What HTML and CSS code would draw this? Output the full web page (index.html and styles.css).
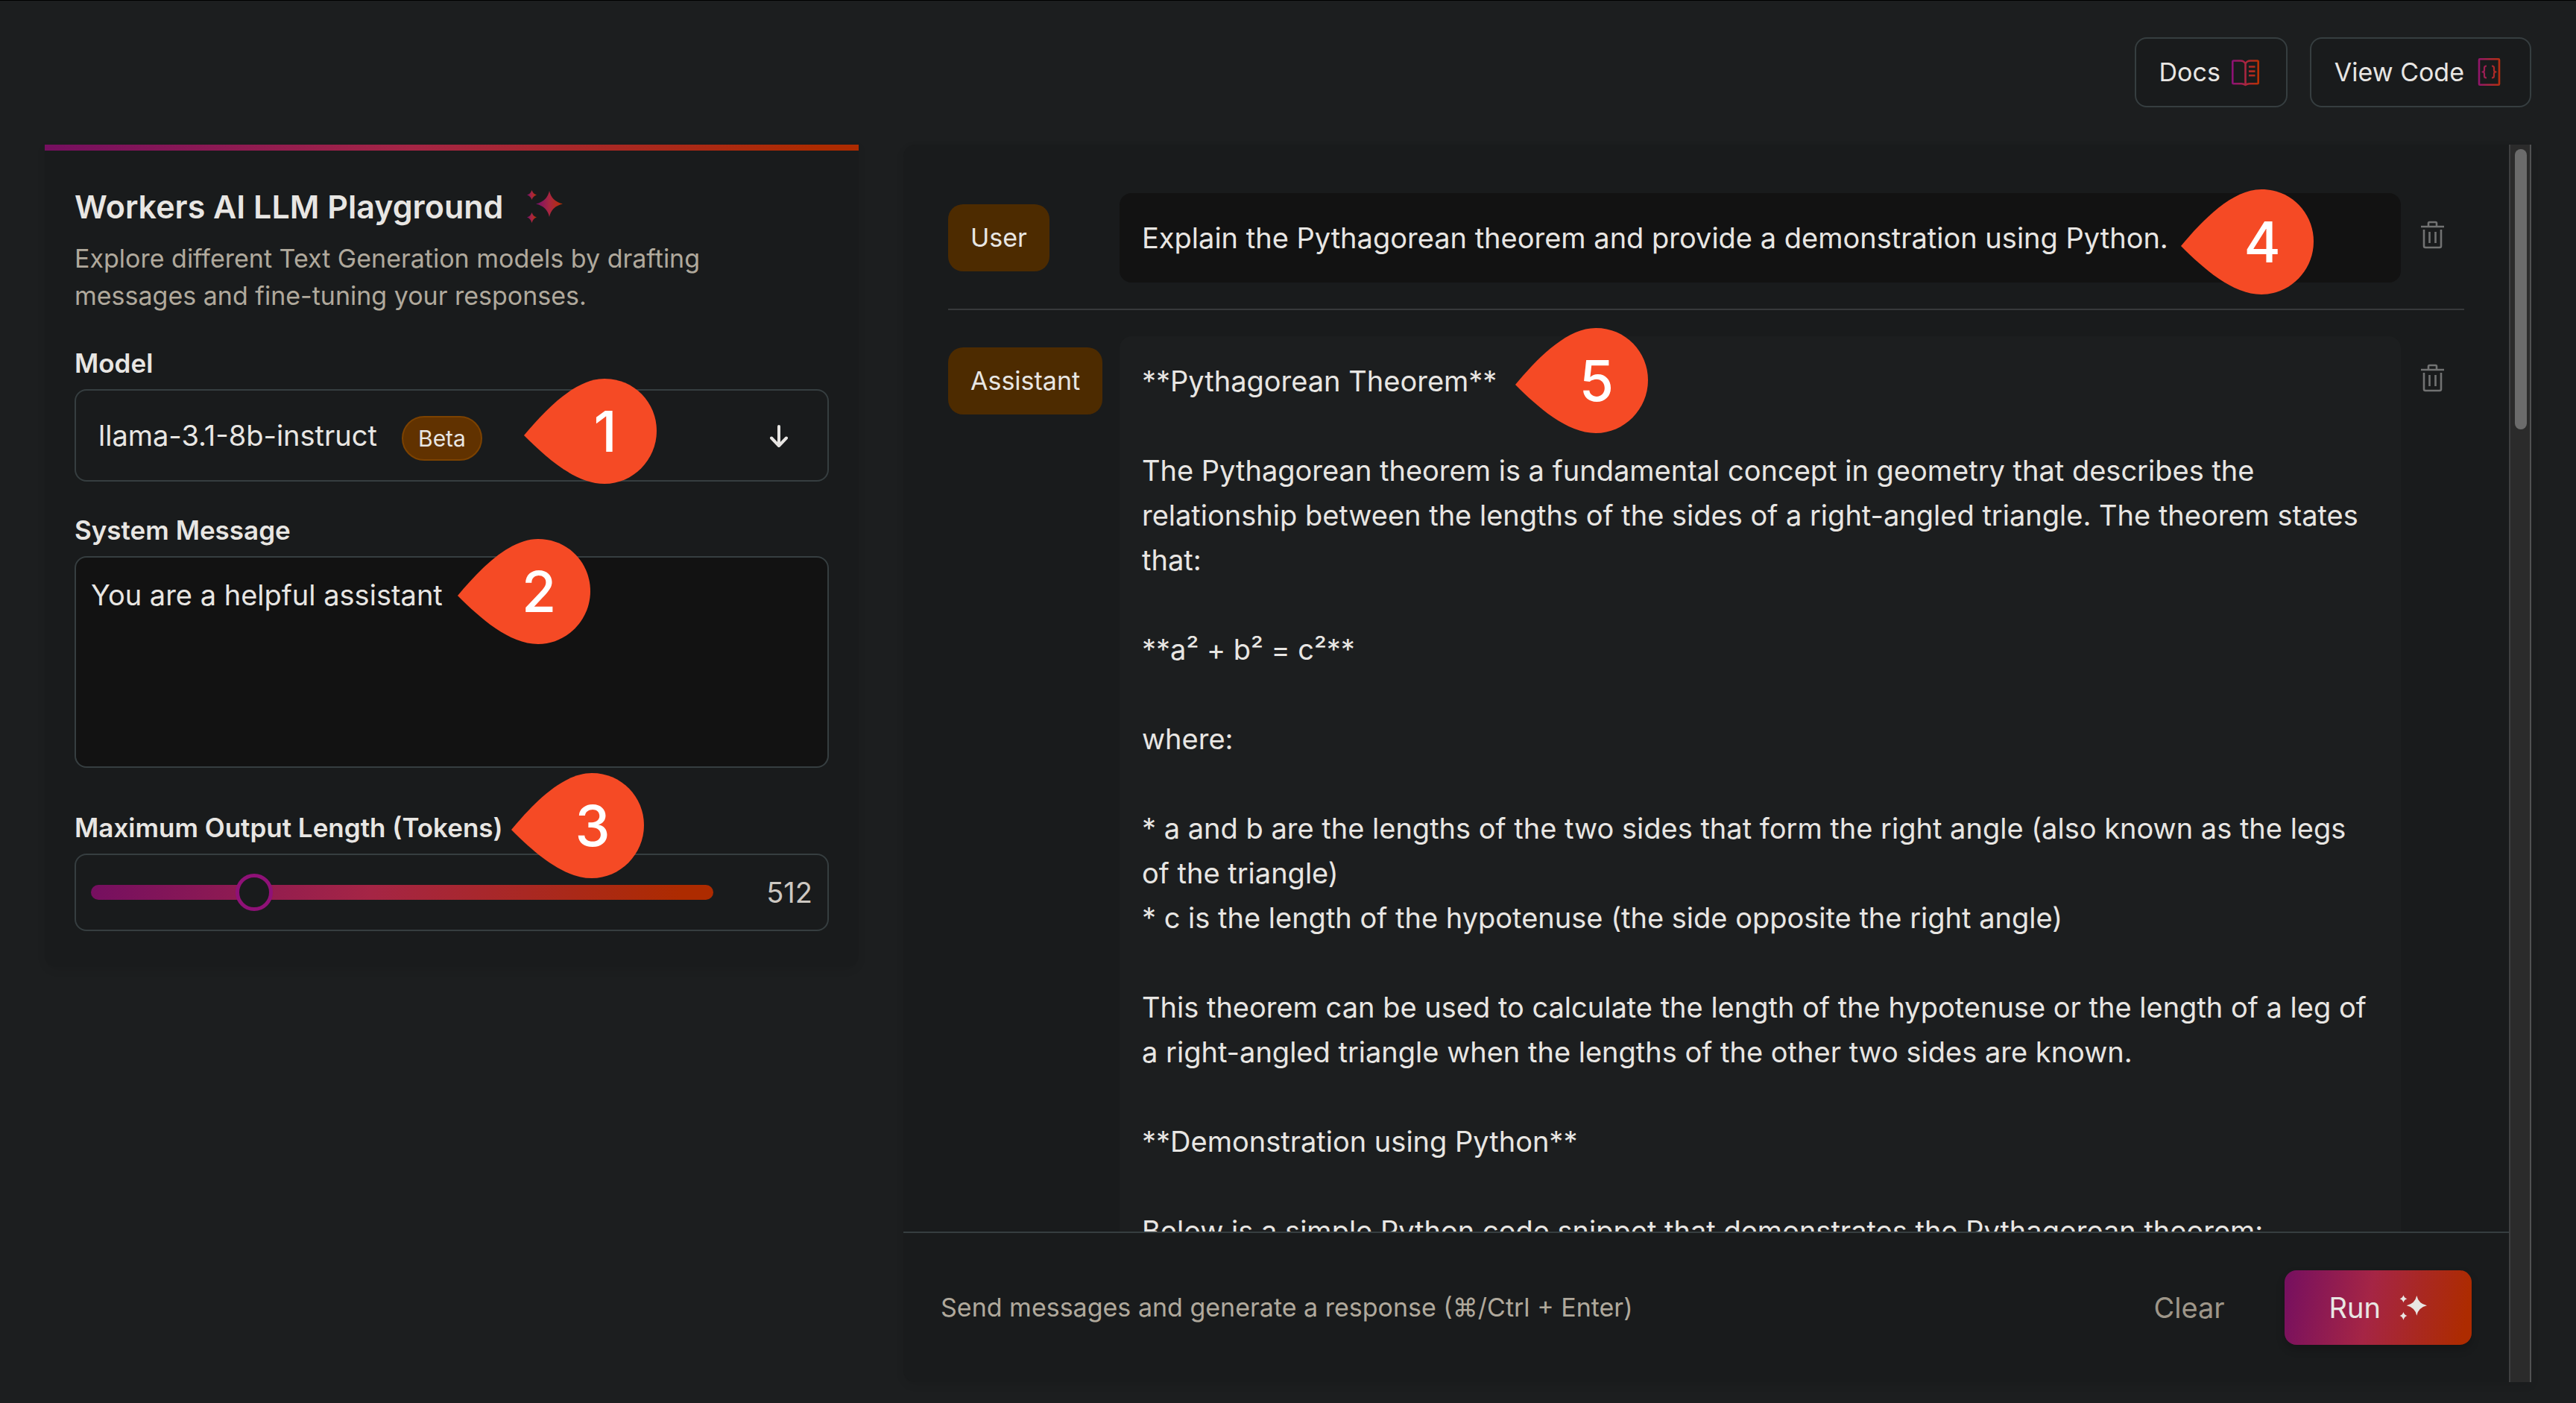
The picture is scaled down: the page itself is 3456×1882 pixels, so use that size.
FILE: index.html
```html
<!DOCTYPE html>
<html lang="en">
<head>
<meta charset="utf-8">
<meta name="viewport" content="width=device-width, initial-scale=1">
<title>Workers AI LLM Playground</title>
<link rel="stylesheet" href="styles.css">
</head>
<body>
<svg class="defs" aria-hidden="true">
  <defs>
    <linearGradient id="brand" x1="0" y1="0" x2="1" y2="0">
      <stop offset="0" stop-color="#750f6c"/>
      <stop offset=".5" stop-color="#a82640"/>
      <stop offset="1" stop-color="#b83000"/>
    </linearGradient>
    <linearGradient id="brand-wide" gradientUnits="userSpaceOnUse" x1="1" y1="20" x2="38" y2="20">
      <stop offset="0" stop-color="#8a1078"/>
      <stop offset=".5" stop-color="#a82640"/>
      <stop offset="1" stop-color="#b83000"/>
    </linearGradient>
    <symbol id="sparkles" viewBox="0 0 50 50">
      <path d="M32 4Q35 18 50 21.500Q35 25 32 39Q29 25 14 21.500Q29 18 32 4Z"/>
      <path d="M8.500 3Q10 8 15 9.500Q10 11 8.500 16Q7 11 2 9.500Q7 8 8.500 3Z"/>
      <path d="M8.500 33Q10 38 15 39.500Q10 41 8.500 47Q7 41 2 39.500Q7 38 8.500 33Z"/>
    </symbol>
    <symbol id="trash" viewBox="0 0 32 38">
      <path d="M0 8H31M10 7V3.500Q10 2 11.500 2H19.500Q21 2 21 3.500V7M4 12V34Q4 36 6 36H25Q27 36 27 34V12M11.500 15V30M19.500 15V30" fill="none" stroke="currentColor" stroke-width="2.600"/>
    </symbol>
    <symbol id="pin" viewBox="0 0 178 141">
      <path d="M0 76C30 40 69 0 108 0C148 0 178 32 178 70C178 109 146 141 108 141C69 141 30 106 0 76Z" fill="#f54a25"/>
    </symbol>
  </defs>
</svg>

<header class="topbar">
  <a class="link-button" href="#docs">Docs
    <svg class="link-icon" viewBox="0 0 40 40" fill="none" stroke="url(#brand-wide)" stroke-width="2.600" stroke-linejoin="round" aria-hidden="true">
      <path d="M19.500 8.500Q17.500 4.500 13 4.500H3.500Q2.300 4.500 2.300 5.700V34Q2.300 35.200 3.500 35.200H14Q17 35.200 19.500 37Q22 35.200 25 35.200H35.500Q36.700 35.200 36.700 34V5.700Q36.700 4.500 35.500 4.500H26Q21.500 4.500 19.500 8.500V37"/>
      <path d="M24 12.500H32.500M24 18.600H32.500M24 24.200H32.500"/>
    </svg>
  </a>
  <a class="link-button" href="#code">View Code
    <svg class="link-icon" viewBox="0 0 40 40" fill="none" stroke="url(#brand-wide)" stroke-width="2.600" stroke-linejoin="round" aria-hidden="true">
      <rect x="6" y="2.300" width="27" height="34.400" rx="1"/>
      <path stroke-width="2.200" d="M16 11.500Q13 11.500 13 14V17Q13 19.500 10.500 19.500Q13 19.500 13 22V25Q13 27.500 16 27.500M23 11.500Q26 11.500 26 14V17Q26 19.500 28.500 19.500Q26 19.500 26 22V25Q26 27.500 23 27.500"/>
    </svg>
  </a>
</header>

<main class="layout">
  <section class="settings">
    <h1 class="title">Workers AI LLM Playground
      <svg class="title-icon" fill="url(#brand)" aria-hidden="true"><use href="#sparkles"/></svg>
    </h1>
    <p class="intro">Explore different Text Generation models by drafting messages and fine-tuning your responses.</p>

    <div class="field">
      <label class="label" for="model">Model</label>
      <div class="model-box">
        <select class="model-select" id="model"><option>llama-3.1-8b-instruct</option></select>
        <span class="beta">Beta</span>
        <svg class="arrow" viewBox="0 0 24 30" fill="none" stroke="currentColor" stroke-width="4" stroke-linecap="round" stroke-linejoin="round" aria-hidden="true"><path d="M12 2V28M2 17.500L12 28L22 17.500"/></svg>
      </div>
      <span class="pin pin-model"><svg aria-hidden="true"><use href="#pin"/></svg><b>1</b></span>
    </div>

    <div class="field">
      <label class="label" for="system">System Message</label>
      <textarea class="system" id="system" rows="4">You are a helpful assistant</textarea>
      <span class="pin pin-system"><svg aria-hidden="true"><use href="#pin"/></svg><b>2</b></span>
    </div>

    <div class="field field-length">
      <label class="label" for="tokens">Maximum Output Length (Tokens)</label>
      <div class="slider-box">
        <input class="slider" id="tokens" type="range" min="0" max="2072" value="512">
        <output class="slider-value" for="tokens">512</output>
      </div>
      <span class="pin pin-length"><svg aria-hidden="true"><use href="#pin"/></svg><b>3</b></span>
    </div>
  </section>

  <section class="chat">
    <div class="chat-body">
      <div class="messages">
        <div class="message">
          <button class="role" type="button">User</button>
          <textarea class="text text-user" rows="1" aria-label="User message">Explain the Pythagorean theorem and provide a demonstration using Python.</textarea>
          <button class="delete" type="button" aria-label="Delete user message"><svg><use href="#trash"/></svg></button>
          <span class="pin pin-user"><svg aria-hidden="true"><use href="#pin"/></svg><b>4</b></span>
        </div>
        <div class="message">
          <button class="role" type="button">Assistant</button>
          <textarea class="text" rows="21" aria-label="Assistant message">**Pythagorean Theorem**

The Pythagorean theorem is a fundamental concept in geometry that describes the relationship between the lengths of the sides of a right-angled triangle. The theorem states that:

**a² + b² = c²**

where:

* a and b are the lengths of the two sides that form the right angle (also known as the legs of the triangle)
* c is the length of the hypotenuse (the side opposite the right angle)

This theorem can be used to calculate the length of the hypotenuse or the length of a leg of a right-angled triangle when the lengths of the other two sides are known.

**Demonstration using Python**

Below is a simple Python code snippet that demonstrates the Pythagorean theorem:</textarea>
          <button class="delete" type="button" aria-label="Delete assistant message"><svg><use href="#trash"/></svg></button>
          <span class="pin pin-assistant"><svg aria-hidden="true"><use href="#pin"/></svg><b>5</b></span>
        </div>
      </div>
      <footer class="actions">
        <p class="hint">Send messages and generate a response (⌘/Ctrl + Enter)</p>
        <button class="clear" type="button">Clear</button>
        <button class="run" type="button">Run <svg fill="currentColor" aria-hidden="true"><use href="#sparkles"/></svg></button>
      </footer>
    </div>
    <div class="scrollbar" aria-hidden="true"><div class="scroll-thumb"></div></div>
  </section>
</main>
</body>
</html>
```
FILE: styles.css
```css
:root {
  --page: #1c1e1f;
  --panel: #191b1c;
  --field: #121212;
  --line: #363e40;
  --text: #e8e6e3;
  --muted: #b0a99c;
  --gradient: linear-gradient(100deg, #750f60, #a52545 45%, #ad2b00 95%);
}

* { box-sizing: border-box; }

body {
  margin: 0;
  height: 100vh;
  display: flex;
  flex-direction: column;
  padding: 49px 60px 28px;
  border-top: 1px solid #000;
  background: var(--page);
  color: var(--text);
  font: 400 38px/60px Inter, "Noto Sans", sans-serif;
}

button, select, textarea, input { font: inherit; color: inherit; margin: 0; }
button { border: 0; background: none; padding: 0; cursor: pointer; }
textarea { display: block; width: 100%; border: 0; resize: none; overflow: hidden; }
h1, p { margin: 0; }
svg { display: block; flex: none; }
.defs { position: absolute; width: 0; height: 0; }

/* Top links */
.topbar { display: flex; justify-content: flex-end; gap: 30px; margin-bottom: 50px; }
.link-button {
  display: flex;
  align-items: center;
  gap: 14px;
  padding: 20px 34px 20px 31px;
  border: 2px solid var(--line);
  border-radius: 16px;
  background: var(--panel);
  color: inherit;
  font-size: 34px;
  line-height: 50px;
  text-decoration: none;
}
.link-icon { width: 40px; height: 40px; }

.layout {
  flex: 1;
  min-height: 0;
  display: grid;
  grid-template-columns: minmax(0, 1fr) minmax(0, 2fr);
  gap: 60px;
}

/* Settings card */
.settings {
  align-self: start;
  padding: 53px 40px 48px;
  border-radius: 0 0 16px 16px;
  background: var(--gradient) top / 100% 8px no-repeat, var(--panel);
  box-shadow: 0 4px 12px rgba(0, 0, 0, .08);
}
.title {
  display: flex;
  align-items: center;
  gap: 30px;
  font-size: 43px;
  font-weight: 600;
  line-height: 60px;
}
.title-icon { width: 50px; height: 50px; }
.intro { max-width: 900px; margin-top: 15px; color: var(--muted); font-size: 34px; line-height: 50px; }
.field { position: relative; margin-top: 40px; }
.field-length { margin-top: 55px; }
.label { display: block; margin-bottom: 10px; font-size: 35px; font-weight: 600; line-height: 50px; }

.model-box { position: relative; }
.model-select {
  display: block;
  width: 100%;
  padding: 30px;
  border: 2px solid var(--line);
  border-radius: 16px;
  background: transparent;
  appearance: none;
}
.beta {
  position: absolute;
  left: 439px;
  top: 36px;
  padding: 3px 20px;
  border: 2px solid #7c4200;
  border-radius: 30px;
  background: #613200;
  font-size: 30px;
  line-height: 50px;
  pointer-events: none;
}
.arrow { position: absolute; right: 55px; top: 48px; width: 24px; height: 30px; pointer-events: none; }

.system { padding: 20px; border: 2px solid var(--line); border-radius: 16px; background: var(--field); }

.slider-box {
  display: flex;
  align-items: center;
  padding: 20px;
  border: 2px solid var(--line);
  border-radius: 16px;
}
.slider {
  flex: 1;
  min-width: 0;
  height: 20px;
  border-radius: 10px;
  background: var(--gradient);
  appearance: none;
}
.slider::-webkit-slider-thumb {
  width: 50px;
  height: 50px;
  border: 5px solid #8f1177;
  border-radius: 50%;
  background: var(--panel);
  appearance: none;
}
.slider-value { width: 133px; color: #cdc8c2; text-align: right; }

/* Chat panel */
.chat {
  display: flex;
  min-height: 0;
  border-radius: 16px 0 0 16px;
  background: var(--panel);
  box-shadow: 0 4px 12px rgba(0, 0, 0, .08);
}
.chat-body { flex: 1; min-width: 0; display: flex; flex-direction: column; }
.messages { flex: 1; min-height: 0; padding: 30px 60px 0; overflow: hidden; }
.message {
  position: relative;
  display: grid;
  grid-template-columns: 230px minmax(0, 1fr) 85px;
  align-items: start;
  padding: 35px 0;
}
.message + .message { border-top: 2px solid #37393b; }
.role {
  justify-self: start;
  margin-top: 15px;
  padding: 20px 30px;
  border-radius: 20px;
  background: #4d2b00;
  font-size: 34px;
  line-height: 50px;
}
.text { padding: 30px; border-radius: 16px; background: #1c1e1f; }
.text-user { background: var(--field); }
.delete { justify-self: center; margin-top: 37px; color: #717272; }
.delete svg { width: 32px; height: 38px; }

.actions {
  display: flex;
  align-items: center;
  padding: 50px;
  border-top: 2px solid var(--line);
}
.hint { flex: 1; color: var(--muted); font-size: 34px; }
.clear { margin-right: 80px; color: #9e9689; }
.run {
  display: flex;
  align-items: center;
  gap: 24px;
  padding: 20px 60px;
  border-radius: 16px;
  background: var(--gradient);
  box-shadow: 0 6px 12px rgba(0, 0, 0, .2);
}
.run svg { width: 38px; height: 38px; }

.scrollbar {
  width: 30px;
  padding: 6px 4px 0 6px;
  border: solid #3f4041;
  border-width: 0 2px;
  border-right-color: #505152;
  background: #2b2b2b;
}
.scroll-thumb { width: 16px; height: 376px; border-radius: 8px; background: #6b6b6b; }

/* Numbered callouts */
.pin { position: absolute; width: 178px; height: 141px; color: #fff; }
.pin svg { width: 100%; height: 100%; }
.pin b {
  position: absolute;
  inset: 0 0 0 40px;
  font-size: 75px;
  font-weight: 500;
  line-height: 141px;
  text-align: center;
}
.pin-model { left: 603px; top: 46px; }
.pin-system { left: 514px; top: 37px; }
.pin-length { left: 586px; top: -48px; }
.pin-user { left: 1654px; top: 30px; }
.pin-assistant { left: 761px; top: 24px; }
```
